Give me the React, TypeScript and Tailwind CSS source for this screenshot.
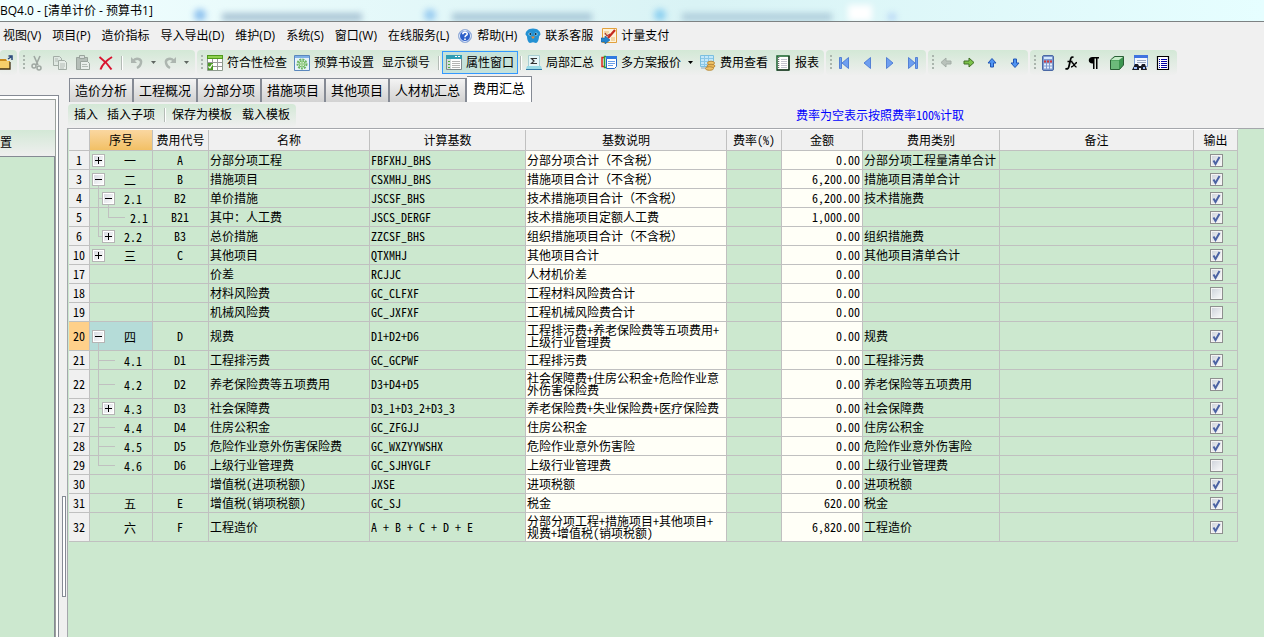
import type { ReactNode } from "react";
import clsx from "clsx";

type Row = {
  no: number;
  seq?: string;
  code?: string;
  name: string;
  base: string;
  desc: string;
  amount: string;
  category?: string;
  output: boolean;
  tree?: Tree;
  tall?: boolean;
  selected?: boolean;
};

type Tree = {
  level: 0 | 1 | 2;
  toggle?: "plus" | "minus";
  // how far the root guide runs in this row
  guide?: "full" | "half";
};

const rows: Row[] = [
  { no: 1, seq: "一", code: "A", name: "分部分项工程", base: "FBFXHJ_BHS", desc: "分部分项合计（不含税）", amount: "0.00", category: "分部分项工程量清单合计", output: true, tree: { level: 0, toggle: "plus" } },
  { no: 3, seq: "二", code: "B", name: "措施项目", base: "CSXMHJ_BHS", desc: "措施项目合计（不含税）", amount: "6,200.00", category: "措施项目清单合计", output: true, tree: { level: 0, toggle: "minus" } },
  { no: 4, seq: "2.1", code: "B2", name: "单价措施", base: "JSCSF_BHS", desc: "技术措施项目合计（不含税）", amount: "6,200.00", category: "技术措施费", output: true, tree: { level: 1, toggle: "minus", guide: "full" } },
  { no: 5, seq: "2.1", code: "B21", name: "其中：人工费", base: "JSCS_DERGF", desc: "技术措施项目定额人工费", amount: "1,000.00", output: true, tree: { level: 2, guide: "full" } },
  { no: 6, seq: "2.2", code: "B3", name: "总价措施", base: "ZZCSF_BHS", desc: "组织措施项目合计（不含税）", amount: "0.00", category: "组织措施费", output: true, tree: { level: 1, toggle: "plus", guide: "half" } },
  { no: 10, seq: "三", code: "C", name: "其他项目", base: "QTXMHJ", desc: "其他项目合计", amount: "0.00", category: "其他项目清单合计", output: true, tree: { level: 0, toggle: "plus" } },
  { no: 17, name: "价差", base: "RCJJC", desc: "人材机价差", amount: "0.00", output: true },
  { no: 18, name: "材料风险费", base: "GC_CLFXF", desc: "工程材料风险费合计", amount: "0.00", output: false },
  { no: 19, name: "机械风险费", base: "GC_JXFXF", desc: "工程机械风险费合计", amount: "0.00", output: false },
  { no: 20, seq: "四", code: "D", name: "规费", base: "D1+D2+D6", desc: "工程排污费+养老保险费等五项费用+\n上级行业管理费", amount: "0.00", category: "规费", output: true, tree: { level: 0, toggle: "minus" }, tall: true, selected: true },
  { no: 21, seq: "4.1", code: "D1", name: "工程排污费", base: "GC_GCPWF", desc: "工程排污费", amount: "0.00", category: "工程排污费", output: true, tree: { level: 1, guide: "full" } },
  { no: 22, seq: "4.2", code: "D2", name: "养老保险费等五项费用", base: "D3+D4+D5", desc: "社会保障费+住房公积金+危险作业意\n外伤害保险费", amount: "0.00", category: "养老保险等五项费用", output: true, tree: { level: 1, guide: "full" }, tall: true },
  { no: 23, seq: "4.3", code: "D3", name: "社会保障费", base: "D3_1+D3_2+D3_3", desc: "养老保险费+失业保险费+医疗保险费", amount: "0.00", category: "社会保障费", output: true, tree: { level: 1, toggle: "plus", guide: "full" } },
  { no: 27, seq: "4.4", code: "D4", name: "住房公积金", base: "GC_ZFGJJ", desc: "住房公积金", amount: "0.00", category: "住房公积金", output: true, tree: { level: 1, guide: "full" } },
  { no: 28, seq: "4.5", code: "D5", name: "危险作业意外伤害保险费", base: "GC_WXZYYWSHX", desc: "危险作业意外伤害险", amount: "0.00", category: "危险作业意外伤害险", output: true, tree: { level: 1, guide: "full" } },
  { no: 29, seq: "4.6", code: "D6", name: "上级行业管理费", base: "GC_SJHYGLF", desc: "上级行业管理费", amount: "0.00", category: "上级行业管理费", output: false, tree: { level: 1, guide: "half" } },
  { no: 30, name: "增值税(进项税额)", base: "JXSE", desc: "进项税额", amount: "0.00", category: "进项税额", output: true },
  { no: 31, seq: "五", code: "E", name: "增值税(销项税额)", base: "GC_SJ", desc: "税金", amount: "620.00", category: "税金", output: true, tree: { level: 0 } },
  { no: 32, seq: "六", code: "F", name: "工程造价", base: "A + B + C + D + E", desc: "分部分项工程+措施项目+其他项目+\n规费+增值税(销项税额)", amount: "6,820.00", category: "工程造价", output: true, tree: { level: 0 }, tall: true },
];

const columns = [
  { label: "", width: "w-[21px]" },
  { label: "序号", width: "w-[63px]" },
  { label: "费用代号", width: "w-[56px]" },
  { label: "名称", width: "w-[161px]" },
  { label: "计算基数", width: "w-[156px]" },
  { label: "基数说明", width: "w-[201px]" },
  { label: "费率(%)", width: "w-[55px]" },
  { label: "金额", width: "w-[81px]" },
  { label: "费用类别", width: "w-[137px]" },
  { label: "备注", width: "w-[194px]" },
  { label: "输出", width: "w-[44px]" },
];

const tabs = ["造价分析", "工程概况", "分部分项", "措施项目", "其他项目", "人材机汇总", "费用汇总"];

/* ---------- icons ---------- */

function Svg({ children }: { children: ReactNode }) {
  return (
    <svg width="16" height="16" viewBox="0 0 16 16" fill="none" className="shrink-0" aria-hidden="true">
      {children}
    </svg>
  );
}

const FolderIcon = () => (
  <svg width="13" height="16" viewBox="0 0 13 16" fill="none" className="shrink-0" aria-hidden="true">
    <path d="M0 4h6l1 2h3v8H0z" fill="#c98a1c" />
    <path d="M0 6h8l2 1v7H0z" fill="#f6cf6a" />
    <path d="M0 14h10V7" stroke="#3f2f10" strokeWidth="1.3" />
    <path d="M8 4l3-2M8.500 1H12v4" stroke="#27457a" strokeWidth="1.500" />
  </svg>
);

const CutIcon = () => (
  <Svg>
    <path d="M5 1l4 9M11 1L7 10" stroke="#9fa8a2" strokeWidth="1.6" />
    <circle cx="5" cy="11" r="2" stroke="#9fa8a2" strokeWidth="1.5" />
    <circle cx="10" cy="13" r="2" stroke="#9fa8a2" strokeWidth="1.5" />
  </Svg>
);

const CopyIcon = () => (
  <Svg>
    <path d="M1.5 1.5h6l2 2v7h-8z" fill="#dfe8e2" stroke="#a3ada6" />
    <path d="M6.5 5.5h6l2 2v7h-8z" fill="#e6ede8" stroke="#a3ada6" />
    <path d="M8 9h5M8 11h5M8 13h4M3 4h3M3 6h3" stroke="#b3bbb5" />
  </Svg>
);

const PasteIcon = () => (
  <Svg>
    <path d="M1.5 2.5h11v12h-11z" fill="#b5beb8" stroke="#9aa49d" />
    <path d="M4.500 .5h5v3h-5z" fill="#d8dfda" stroke="#9aa49d" />
    <path d="M5.500 6.500h7l2 2v6h-9z" fill="#e9efeb" stroke="#9aa49d" />
    <path d="M7 9.500h5M7 11.500h6" stroke="#b3bbb5" />
  </Svg>
);

const DeleteIcon = () => (
  <Svg>
    <path d="M1.500 2c4 3 9 8 12 12.500M14 2C9 5 4 10 2.500 14.500" stroke="#d9132f" strokeWidth="2" />
  </Svg>
);

const UndoIcon = () => (
  <Svg>
    <path d="M4 6c3-4 9-2 8 2-.4 2-2 4-4 5" stroke="#adb6b0" strokeWidth="2.400" />
    <path d="M2 2v6h6z" fill="#adb6b0" />
  </Svg>
);

const RedoIcon = () => (
  <Svg>
    <path d="M12 6C9 2 3 4 4 8c.4 2 2 4 4 5" stroke="#adb6b0" strokeWidth="2.400" />
    <path d="M14 2v6H8z" fill="#adb6b0" />
  </Svg>
);

const CheckSheetIcon = () => (
  <Svg>
    <path d="M.5.5h15v15H.5z" fill="#fff" stroke="#8d9a8d" />
    <path d="M5.500 4v11M10.500 4v11M1 7.500h14M1 11.500h14" stroke="#9a9a9a" />
    <path d="M0 0h16v4H0z" fill="#4f9a1c" />
    <path d="M1 1h14v2H1z" fill="#8fd14f" />
    <path d="M1 8h5v7H1z" fill="#4c9a25" />
    <path d="M1.500 11.500l1.500 1.500 2.500-4" stroke="#fff" strokeWidth="1.200" />
  </Svg>
);

const SettingsIcon = () => (
  <Svg>
    <path d="M.5.5h15v15H.5z" fill="#e6f2fb" stroke="#5b87bd" />
    <path d="M1 1h14v2H1z" fill="#7fb0e6" />
    <circle cx="8" cy="9" r="4.500" stroke="#6db560" strokeWidth="2" strokeDasharray="2 1" />
    <circle cx="8" cy="9" r="3" fill="#d8f0cf" stroke="#73bb65" />
    <circle cx="8" cy="9" r="1.200" fill="#fff" stroke="#73bb65" />
  </Svg>
);

const PropertyIcon = () => (
  <Svg>
    <path d="M.5.5h15v14H.5z" fill="#fff" stroke="#7e8a8d" />
    <path d="M0 0h16v4H0z" fill="#2f9fb5" />
    <path d="M9 1.500h2M12 1.500h2" stroke="#fff" />
    <path d="M1 4h4v10H1z" fill="#d5dcdc" />
    <path d="M2 6.500h2M2 9.500h2M2 12.500h2" stroke="#4fae3f" />
    <path d="M6 6.500h8M6 8.500h8M6 10.500h8M6 12.500h8" stroke="#b4b4b4" />
  </Svg>
);

const SumIcon = () => (
  <Svg>
    <path d="M2.500.5h11v11h-11z" fill="#e6f6f8" stroke="#a8cdd1" />
    <path d="M11 3.500H5.500L8 6 5.500 8.500H11" stroke="#333" strokeWidth="1.200" />
    <path d="M1 11h14l1 3H0z" fill="#9adbe6" />
    <path d="M0 14.500h16" stroke="#2f78a8" />
  </Svg>
);

const PlansIcon = () => (
  <Svg>
    <path d="M3 2.500H1v9h2" stroke="#dc2a1c" strokeWidth="1.500" />
    <path d="M5 1.500H3.500v11H5" stroke="#2f9c3a" strokeWidth="1.500" />
    <path d="M5.500 1.500h10v10l-2 2h-8z" fill="#fff" stroke="#2367c9" />
    <path d="M5 1h11v3H5z" fill="#2f7ae0" />
    <path d="M7 6.500h7M7 8.500h7M7 10.500h5" stroke="#6aa0e8" />
  </Svg>
);

const CostViewIcon = () => (
  <Svg>
    <path d="M.5.500h13v11H.5z" fill="#c4e8f9" stroke="#7bbfe0" />
    <path d="M1 3.500h12M1 6.500h12M1 9.500h12M4.500 1v10M8.500 1v10" stroke="#8cc7e6" />
    <path d="M1 12h6v2H1z" fill="#b9cad3" />
    <ellipse cx="11" cy="8" rx="3.500" ry="1.800" fill="#f0c76a" stroke="#b98a3c" />
    <ellipse cx="11" cy="11" rx="4" ry="1.800" fill="#e9b654" stroke="#b98a3c" />
    <ellipse cx="9.500" cy="13.500" rx="4" ry="1.800" fill="#efc267" stroke="#b98a3c" />
  </Svg>
);

const ReportIcon = () => (
  <Svg>
    <path d="M2 1h12v14H2z" fill="#fff" stroke="#17632b" strokeWidth="1.500" />
    <path d="M6 4.500h6M6 6.500h6M6 8.500h6M6 10.500h6M6 12.500h6" stroke="#c3c3cf" />
    <path d="M3.500 2v12" stroke="#6a6a6a" strokeWidth="1.500" strokeDasharray="1 1" />
    <path d="M14 1v14H2" stroke="#222" />
  </Svg>
);

const HelpIcon = () => (
  <Svg>
    <circle cx="8" cy="8" r="6.500" fill="#2d5fc9" stroke="#9db4d8" />
    <circle cx="8" cy="8" r="5.500" stroke="#e8effb" />
    <path d="M5.800 6.300c0-3 4.600-2.800 4.400-.2C10 7.500 8 7.600 8 9.300M8 10.500v1.600" stroke="#fff" strokeWidth="1.600" />
  </Svg>
);

const ServiceIcon = () => (
  <Svg>
    <path d="M8 .5c5 0 7.500 3 7.500 6L14 8.500c0 3-1.500 6.500-3 6.500l-3-.7L5 15c-1.500 0-3-3.500-3-6.500L.5 6.500C.5 3.500 3 .5 8 .5z" fill="#2391d3" />
    <circle cx="5" cy="6" r="1.600" fill="#a5def7" />
    <circle cx="11" cy="6" r="1.600" fill="#a5def7" />
    <circle cx="5.300" cy="6" r="1" fill="#123" />
    <circle cx="10.700" cy="6" r="1" fill="#123" />
    <path d="M6 8.500h4L8 11z" fill="#f08a2c" />
  </Svg>
);

const PayIcon = () => (
  <Svg>
    <path d="M1.500.5h14v14h-14z" fill="#fdf3da" stroke="#e2a13c" />
    <path d="M3 4h5M3 6h4M10 10h4M10 12h4" stroke="#e8b96e" />
    <path d="M14 2L7 10" stroke="#c52a1f" strokeWidth="2.200" />
    <path d="M4 5l2 3 3-2" stroke="#a33" strokeWidth="1.200" />
    <path d="M0 10h4V8l5 4-5 4v-2H0z" fill="#2486cf" stroke="#145a94" strokeWidth=".6" />
  </Svg>
);

function NavIcon({ kind }: { kind: "first" | "prev" | "next" | "last" }) {
  return (
    <Svg>
      <g fill="#6f9ff0" stroke="#3f70cf" strokeWidth=".8">
        {kind === "first" && <path d="M3.500 2.500h2v11h-2zM12.500 2.500v11L6 8z" />}
        {kind === "prev" && <path d="M11.500 2.500v11L5 8z" />}
        {kind === "next" && <path d="M4.500 2.500v11L11 8z" />}
        {kind === "last" && <path d="M3.500 2.500v11L10 8zM10.500 2.500h2v11h-2z" />}
      </g>
    </Svg>
  );
}

const ArrowLeftIcon = () => (
  <Svg>
    <path d="M3 7.500L8 3v3h5v3H8v3z" fill="#b9c2bb" stroke="#a3ada6" />
  </Svg>
);

const ArrowRightIcon = () => (
  <Svg>
    <path d="M13 7.500L8 3v3H3v3h5v3z" fill="#7cc24a" stroke="#3f6f24" />
  </Svg>
);

const ArrowUpIcon = () => (
  <Svg>
    <path d="M8 3.500L4 8h2.500v4h3V8H12z" fill="#4f94f2" stroke="#2256b5" />
  </Svg>
);

const ArrowDownIcon = () => (
  <Svg>
    <path d="M8 12.500L4 8h2.500V4h3v4H12z" fill="#4f94f2" stroke="#2256b5" />
  </Svg>
);

const CalculatorIcon = () => (
  <Svg>
    <rect x="2.500" y=".5" width="11" height="15" rx="1.500" fill="#7f9bd0" stroke="#4a68a5" />
    <path d="M4 2h8v2H4z" fill="#d3e8fc" />
    <path d="M4 6.500h2M7 6.500h2M10 6.500h2" stroke="#d33a3a" strokeWidth="1.800" />
    <path d="M4 9.500h2M7 9.500h2M10 9.500h2M4 12.500h2M7 12.500h2M10 12.500h2" stroke="#e8effb" strokeWidth="1.800" />
  </Svg>
);

const FunctionIcon = () => (
  <Svg>
    <path d="M10.500 2.500C8.500 1 7.800 3 7.200 6L5.800 12c-.5 2-2 2.500-3.300 1.300M4.500 6.500h5" stroke="#000" strokeWidth="1.700" />
    <path d="M8.500 7.500c2-.6 2.500 4.500 5 4.500M14 7.500c-2 0-3 4.500-6 4.500" stroke="#000" strokeWidth="1.400" />
  </Svg>
);

const ParagraphIcon = () => (
  <Svg>
    <path d="M13 2H6.500C1.500 2 1.500 8.500 6.500 8.500H7V14h1.500V3.500h1.500V14H11.500V3.500H13z" fill="#000" />
  </Svg>
);

const CubeIcon = () => (
  <Svg>
    <path d="M1.500 5l4-3.500h9V10l-4 4.500h-9z" fill="#3c9650" stroke="#2a5e36" />
    <path d="M2 5l4-3h8l-4 3z" fill="#c5ecc8" />
    <path d="M2 5.500h8v8.500H2z" fill="#6cba7b" />
  </Svg>
);

const FindIcon = () => (
  <Svg>
    <path d="M2.500.5h13v11h-13z" fill="#f3f8ff" stroke="#7d9fd8" />
    <path d="M2 0h14v3H2z" fill="#3f74e0" />
    <path d="M5 5.500h9M5 7.500h9" stroke="#9aa8c0" />
    <path d="M3 9h3l1 2h2l1-2h3l2 6H9v-2H7v2H0z" fill="#1b1b26" />
    <path d="M2 12h3v2H2zM11 12h2v2h-2z" fill="#9fc2ff" />
  </Svg>
);

const ListIcon = () => (
  <Svg>
    <path d="M2.500 1.500h11v13h-11z" fill="#fff" stroke="#000" strokeWidth="1.200" />
    <path d="M4 4.500h1M4 6.500h1M4 8.500h1M4 10.500h1M4 12.500h1M6 4.500h6M6 6.500h6M6 8.500h6M6 10.500h6M6 12.500h6" stroke="#0000a0" />
  </Svg>
);

const Caret = ({ color = "#5f6661" }: { color?: string }) => (
  <svg width="5" height="3" viewBox="0 0 5 3" className="shrink-0" aria-hidden="true">
    <path d="M0 0h5L2.500 3z" fill={color} />
  </svg>
);

/* ---------- toolbar pieces ---------- */

function Group({ children, className }: { children: ReactNode; className?: string }) {
  return (
    <div className={clsx("flex h-[25px] shrink-0 items-center rounded-sm bg-linear-to-b from-[#d3e8d6] to-[#efefef]", className)}>
      {children}
    </div>
  );
}

const Grip = () => <span className="mx-1 h-4 w-[2px] shrink-0 bg-[repeating-linear-gradient(#aab5ad_0_2px,transparent_2px_4px)]" />;

const Sep = () => <span className="h-[14px] w-[2px] shrink-0 border-l border-[#b4bbb6] bg-white" />;

function Tool({ icon, label, title, className }: { icon?: ReactNode; label?: string; title?: string; className?: string }) {
  return (
    <button type="button" aria-label={title ?? label} className={clsx("flex shrink-0 items-center gap-1 whitespace-nowrap", className)}>
      {icon}
      {label}
    </button>
  );
}

const menus: { label: string; icon?: ReactNode }[] = [
  { label: "视图(V)" },
  { label: "项目(P)" },
  { label: "造价指标" },
  { label: "导入导出(D)" },
  { label: "维护(D)" },
  { label: "系统(S)" },
  { label: "窗口(W)" },
  { label: "在线服务(L)" },
  { label: "帮助(H)", icon: <HelpIcon /> },
  { label: "联系客服", icon: <ServiceIcon /> },
  { label: "计量支付", icon: <PayIcon /> },
];

function TitleBar() {
  return (
    <header className="relative flex h-[22px] items-center overflow-hidden border-b border-[#7d8283] bg-linear-to-r from-[#f2ffff] via-[#d9f3f5] via-55% to-[#e6feff]">
      {/* windows behind the glass frame */}
      <div className="absolute inset-0 flex items-end gap-4 pl-[194px] blur-[3px]" aria-hidden="true">
        <span className="h-3 w-3 shrink-0 rounded-full bg-[#8cc0ee]" />
        <span className="h-2 w-[140px] shrink-0 bg-[#a9c4d4]" />
        <span className="ml-[46px] h-3 w-3 shrink-0 rounded-full bg-[#98cbf0]" />
        <span className="h-2 w-[140px] shrink-0 bg-[#a9c8d8]" />
        <span className="ml-[46px] h-3 w-3 shrink-0 rounded-full bg-[#8bcff0]" />
        <span className="h-2 w-[150px] shrink-0 bg-[#b0cedc]" />
        <span className="h-4 w-6 shrink-0 bg-white" />
        <span className="h-2 w-2 shrink-0 rounded-full bg-[#b3d2f5]" />
      </div>
      <h1 className="relative text-[12px] leading-4">BQ4.0 - [清单计价 - 预算书1]</h1>
    </header>
  );
}

function MenuBar() {
  return (
    <nav className="flex h-7 items-center gap-[11px] whitespace-nowrap pl-[3px]">
      {menus.map((m) => (
        <button key={m.label} type="button" className={clsx("flex shrink-0 items-center gap-1", m.icon && "-ml-[3px]")}>
          {m.icon}
          {m.label}
        </button>
      ))}
    </nav>
  );
}

function MainToolbar() {
  return (
    <div className="flex gap-[2px] overflow-hidden">
      <Group className="w-[17px]">
        <Tool title="打开" icon={<FolderIcon />} />
      </Group>
      <Group className="w-[176px]">
        <Grip />
        <div className="flex items-center gap-[7px]">
          <Tool title="剪切" icon={<CutIcon />} />
          <Tool title="复制" icon={<CopyIcon />} />
          <Tool title="粘贴" icon={<PasteIcon />} />
          <Tool title="删除" icon={<DeleteIcon />} />
        </div>
        <div className="ml-[7px] flex items-center gap-[6px]">
          <Sep />
          <Tool title="撤销" icon={<UndoIcon />} />
          <Caret />
          <Tool title="重做" icon={<RedoIcon />} />
          <Caret />
        </div>
      </Group>
      <Group className="w-[627px]">
        <Grip />
        <Tool label="符合性检查" icon={<CheckSheetIcon />} />
        <Tool label="预算书设置" icon={<SettingsIcon />} className="ml-[7px]" />
        <Tool label="显示锁号" className="mx-2" />
        <Sep />
        <Tool label="属性窗口" icon={<PropertyIcon />} className="mx-[2px] h-[23px] border border-[#3399ff] bg-[#c5e2da] px-[3px]" />
        <Sep />
        <Tool label="局部汇总" icon={<SumIcon />} className="ml-1" />
        <Tool label="多方案报价" icon={<PlansIcon />} className="mx-[7px]" />
        <Caret color="#000" />
        <Tool label="费用查看" icon={<CostViewIcon />} className="mx-[7px]" />
        <Tool label="报表" icon={<ReportIcon />} />
      </Group>
      <Group className="w-[100px]">
        <Grip />
        <div className="flex items-center gap-[7px]">
          <Tool title="首条" icon={<NavIcon kind="first" />} />
          <Tool title="上一条" icon={<NavIcon kind="prev" />} />
          <Tool title="下一条" icon={<NavIcon kind="next" />} />
          <Tool title="末条" icon={<NavIcon kind="last" />} />
        </div>
      </Group>
      <Group className="w-[100px]">
        <Grip />
        <div className="flex items-center gap-[7px]">
          <Tool title="升级" icon={<ArrowLeftIcon />} />
          <Tool title="降级" icon={<ArrowRightIcon />} />
          <Tool title="上移" icon={<ArrowUpIcon />} />
          <Tool title="下移" icon={<ArrowDownIcon />} />
        </div>
      </Group>
      <Group className="w-[147px]">
        <Grip />
        <div className="flex items-center gap-[7px]">
          <Tool title="计算器" icon={<CalculatorIcon />} />
          <Tool title="函数" icon={<FunctionIcon />} />
          <Tool title="特殊符号" icon={<ParagraphIcon />} />
          <Tool title="图元" icon={<CubeIcon />} />
          <Tool title="查找" icon={<FindIcon />} />
          <Tool title="列表" icon={<ListIcon />} />
        </div>
      </Group>
    </div>
  );
}

/* ---------- cost table ---------- */

function TreeCell({ seq, tree }: { seq?: string; tree?: Tree }) {
  if (!tree) return null;
  const { level, toggle, guide } = tree;
  return (
    <>
      <svg className="absolute inset-0 h-full w-full" stroke="#c0c0c0" shapeRendering="crispEdges" aria-hidden="true">
        {guide && <line x1="8.500" y1="0" x2="8.500" y2={guide === "full" ? "100%" : "50%"} />}
        {level === 0 && toggle === "minus" && <line x1="8.500" y1="50%" x2="8.500" y2="100%" />}
        {level === 1 && <line x1="8" y1="50%" x2={toggle ? "12" : "25"} y2="50%" />}
        {level === 1 && toggle === "minus" && <line x1="18.500" y1="50%" x2="18.500" y2="100%" />}
        {level === 2 && <line x1="18.500" y1="0" x2="18.500" y2="50%" />}
        {level === 2 && <line x1="18" y1="50%" x2="35" y2="50%" />}
      </svg>
      <div className="relative flex items-center">
        <span className={clsx("flex w-[25px] shrink-0", level === 0 ? "pl-[2px]" : "pl-3")}>
          {toggle && (
            <button
              type="button"
              aria-label={toggle === "plus" ? "展开" : "折叠"}
              className="flex h-[13px] w-[13px] items-center justify-center border border-[#b5b5b5] bg-linear-to-br from-[#d5d8df] to-white outline-1 -outline-offset-2 outline-white"
            >
              <svg width="7" height="7" viewBox="0 0 7 7" stroke="#000" shapeRendering="crispEdges" aria-hidden="true">
                <path d={toggle === "plus" ? "M0 3.500h7M3.500 0v7" : "M0 3.500h7"} />
              </svg>
            </button>
          )}
        </span>
        <span className={clsx("pt-px", level === 2 ? "pl-[15px]" : "pl-[9px]")}>{seq}</span>
      </div>
    </>
  );
}

function OutputBox({ checked, no }: { checked: boolean; no: number }) {
  return (
    <span className="relative mx-auto block h-[13px] w-[13px]">
      <input
        type="checkbox"
        defaultChecked={checked}
        aria-label={`输出 ${no}`}
        className="peer block h-[13px] w-[13px] appearance-none border border-[#8e8f8f] bg-linear-to-br from-[#cdd2da] to-[#fbfbfb] outline-1 -outline-offset-2 outline-[#f4f4f4]"
      />
      <svg viewBox="0 0 13 13" className="pointer-events-none absolute inset-0 hidden peer-checked:block" fill="none" aria-hidden="true">
        <path d="M3.500 6.500l2 3.500 4-7" stroke="#4b62a3" strokeWidth="2" />
      </svg>
    </span>
  );
}

function CostTable() {
  const cell = "border-r border-b border-[#c0c0c0] pl-px pr-[2px]";
  return (
    <table className="w-[1169px] table-fixed border-separate border-spacing-0 leading-3 [font-family:'Noto_Sans_Mono_CJK_SC','Noto_Sans_CJK_SC',monospace]">
      <thead>
        <tr className="h-[21px]">
          {columns.map((c) => (
            <th
              key={c.label}
              scope="col"
              className={clsx(
                "border-r border-b border-[#c0c0c0] font-normal whitespace-nowrap",
                c.width,
                c.label === "序号" ? "bg-linear-to-b from-[#fad7a0] to-[#f2c064]" : "bg-[#f0f0f0]"
              )}
            >
              {c.label}
            </th>
          ))}
        </tr>
      </thead>
      <tbody className="bg-[#cce8cf]">
        {rows.map((r) => (
          <tr key={r.no} className={r.tall ? "h-[29px]" : "h-[19px]"}>
            <th scope="row" className={clsx("border-r border-b border-[#c0c0c0] font-normal", r.selected ? "bg-[#ffd08a]" : "bg-[#f0f0f0]")}>
              {r.no}
            </th>
            <td className={clsx("relative border-r border-b border-[#c0c0c0]", r.selected && "bg-[#b5dcd8]")}>
              <TreeCell seq={r.seq} tree={r.tree} />
            </td>
            <td className={clsx(cell, "text-center")}>{r.code}</td>
            <td className={clsx(cell, "whitespace-nowrap")}>{r.name}</td>
            <td className={clsx(cell, "whitespace-nowrap")}>{r.base}</td>
            <td className={clsx(cell, "bg-[#fffff7] whitespace-pre")}>{r.desc}</td>
            <td className={cell}></td>
            <td className={clsx(cell, "bg-[#fffff7] text-right")}>{r.amount}</td>
            <td className={clsx(cell, "whitespace-nowrap")}>{r.category}</td>
            <td className={cell}></td>
            <td className="border-r border-b border-[#c0c0c0] pl-[2px]">
              <OutputBox checked={r.output} no={r.no} />
            </td>
          </tr>
        ))}
      </tbody>
    </table>
  );
}

function LeftPanel() {
  return (
    <aside className="mt-5 flex w-[59px] shrink-0 flex-col border-t border-r border-[#858a94] bg-white pt-[3px] pr-[2px]">
      <div className="flex grow flex-col border-t border-r border-[#9aa09c] bg-[#f0f0f0]">
        <div className="mt-[30px] flex h-[26px] items-center bg-linear-to-b from-[#d3e8d6] to-[#efefef]">
          <button type="button">置</button>
        </div>
        <div className="grow border-t border-r border-[#858a94] bg-[#cce8cf]"></div>
      </div>
    </aside>
  );
}

export default function App() {
  return (
    <div className="flex min-h-screen flex-col overflow-hidden bg-[#f0f0f0] text-[12px] text-black [font-family:'Open_Sans','Noto_Sans_CJK_SC',sans-serif]">
      <TitleBar />
      <MenuBar />
      <MainToolbar />
      <div className="flex grow">
        <LeftPanel />
        <div className="flex w-2 shrink-0 flex-col justify-end pb-10 pl-[3px]">
          <span className="h-[101px] w-1 border border-[#858a94] bg-white" />
        </div>
        <main className="flex min-w-0 grow flex-col">
          <div role="tablist" className="flex h-[27px] items-end pl-[2px] text-[13px]">
            {tabs.map((t) => {
              const active = t === "费用汇总";
              return (
                <button
                  key={t}
                  type="button"
                  role="tab"
                  aria-selected={active}
                  className={clsx(
                    "shrink-0 border-t border-[#858a94] whitespace-nowrap first:border-l",
                    active ? "h-[26px] border-r bg-white px-[6px] pb-[2px]" : "h-6 border-r-2 bg-linear-to-b from-[#f4f4f4] to-[#d2d2d2] px-[5px]"
                  )}
                >
                  {t}
                </button>
              );
            })}
          </div>
          <div className="flex h-[26px] items-center pl-px">
            <div className="flex h-[23px] w-[228px] shrink-0 items-center rounded-sm bg-linear-to-b from-[#d3e8d6] to-[#efefef] pl-[6px]">
              <Tool label="插入" />
              <Tool label="插入子项" className="mx-[9px]" />
              <Sep />
              <Tool label="保存为模板" className="mx-[6px]" />
              <Tool label="载入模板" className="ml-1" />
            </div>
            <p className="ml-[500px] whitespace-nowrap text-[#0000ff] [font-family:'Noto_Sans_Mono_CJK_SC','Noto_Sans_CJK_SC',monospace]">
              费率为空表示按照费率100%计取
            </p>
          </div>
          <div className="grow border-t border-l border-[#a5a7ac] bg-[#cce8cf] pl-px">
            <div className="w-[1169px] bg-white pt-px">
              <CostTable />
            </div>
          </div>
        </main>
      </div>
    </div>
  );
}
